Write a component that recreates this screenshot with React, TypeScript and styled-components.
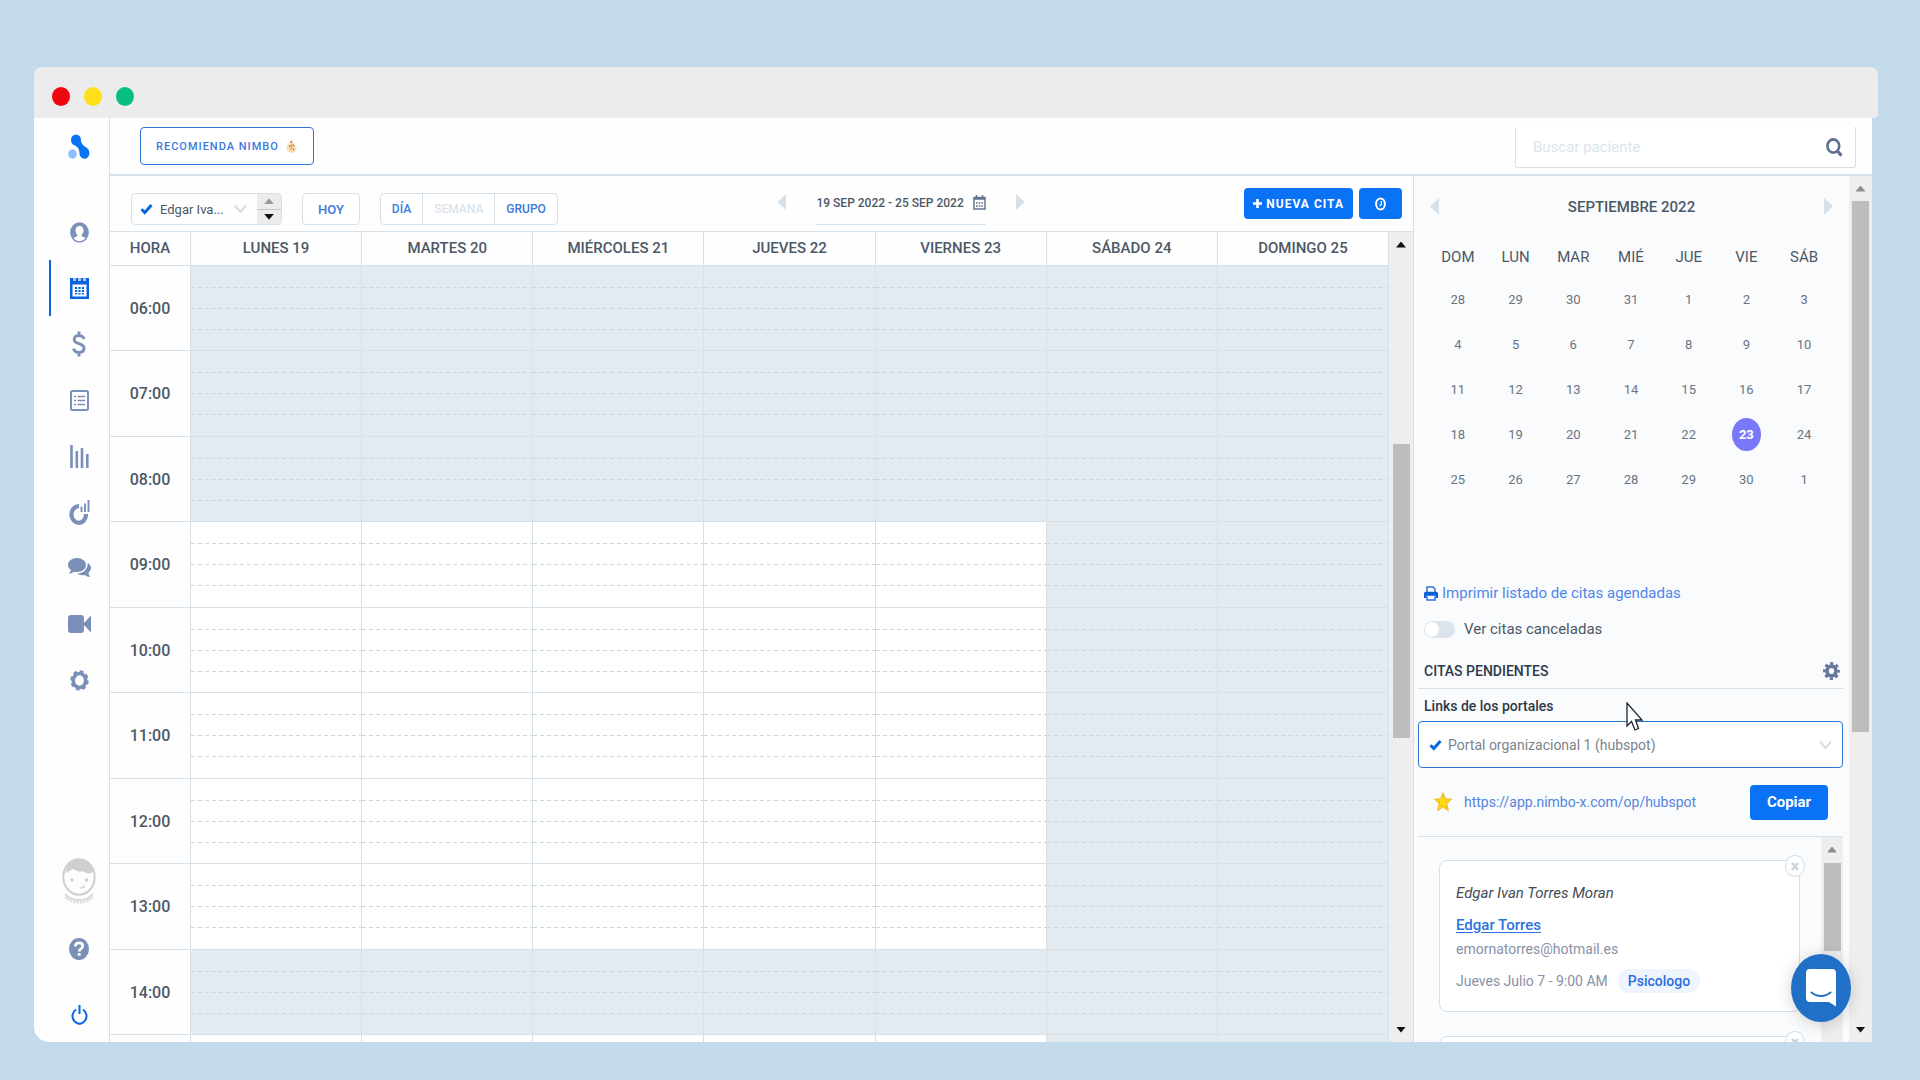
import React, { useState } from "react";
import styled, { createGlobalStyle } from "styled-components";

const c = {
  blue: "#0a72f5",
  link: "#3b78e0",
  line: "#d6e0e8",
  slate: "#7b90b8",
  ink: "#4d5866",
  closed: "#e4ebf0",
  panel: "#f9fbfd",
  thumb: "#bdbdbd",
  track: "#eeeeee",
};

const GlobalStyle = createGlobalStyle`
  *, *::before, *::after { box-sizing: border-box; }
  body { margin: 0; background: #c3daeb; font-family: Roboto, "Liberation Sans", sans-serif; font-size: 15px; color: ${c.ink}; }
  button, input, select { font: inherit; color: inherit; }
  button { cursor: pointer; padding: 0; }
  svg { display: block; flex: none; }
`;

const Page = styled.div`
  position: relative;
  height: 100vh;
  display: flex;
  flex-direction: column;
  padding: 67px 42px 38px 34px;
`;
const TitleBar = styled.div`
  flex: none;
  height: 51px;
  display: flex;
  align-items: center;
  gap: 14px;
  padding: 7px 18px 0;
  background: #ececec;
  border-radius: 8px 8px 4px 0;
`;
const Dot = styled.span<{ $color: string }>`
  width: 18px;
  height: 19px;
  border-radius: 50%;
  background: ${(p) => p.$color};
`;
const Body = styled.div`
  flex: 1;
  min-height: 0;
  display: flex;
  margin-right: 6px;
  background: #fefefe;
  border-radius: 0 0 0 15px;
  overflow: hidden;
`;

const Sidebar = styled.nav`
  flex: none;
  width: 76px;
  display: flex;
  flex-direction: column;
  border-right: 1px solid ${c.line};
`;
const Logo = styled.a`
  height: 86px;
  padding: 16px 0 0 34px;
`;
const NavItem = styled.a<{ $active?: boolean }>`
  height: 56px;
  margin-left: 15px;
  padding-right: 2px;
  display: flex;
  align-items: center;
  justify-content: center;
  border-left: 2px solid ${(p) => (p.$active ? "#0b62dc" : "transparent")};
  color: ${(p) => (p.$active ? "#0b62dc" : c.slate)};
`;
const NavFoot = styled.div`
  margin-top: auto;
  padding: 0 14px 17px 29px;
  display: flex;
  flex-direction: column;
  align-items: center;
  color: ${c.slate};
`;
const FootLink = styled.a<{ $gap?: number; $blue?: boolean }>`
  margin-top: ${(p) => p.$gap || 0}px;
  color: ${(p) => (p.$blue ? "#0b66e0" : "inherit")};
`;

const Content = styled.div`
  flex: 1;
  min-width: 0;
  display: flex;
  flex-direction: column;
`;
const Header = styled.header`
  flex: none;
  height: 58px;
  display: flex;
  justify-content: space-between;
  padding: 9px 16px 0 30px;
  border-bottom: 2px solid ${c.line};
`;
const Recommend = styled.button`
  height: 38px;
  padding: 0 16px 0 15px;
  display: flex;
  align-items: center;
  gap: 7px;
  border: 1px solid #2d74d2;
  border-radius: 4px;
  background: #fff;
  color: ${c.link};
  font-size: 11px;
  font-weight: 500;
  letter-spacing: 1px;
`;
const Search = styled.form`
  width: 341px;
  height: 41px;
  display: flex;
  align-items: center;
  padding: 0 12px 0 17px;
  background: #fff;
  border: 1px solid ${c.line};
  border-top: 0;
  border-radius: 0 0 3px 3px;
`;
const SearchInput = styled.input`
  flex: 1;
  min-width: 0;
  border: 0;
  padding: 0;
  outline: none;
  background: transparent;
  &::placeholder { color: #dbe4ec; opacity: 1; }
`;
const IconButton = styled.button`
  border: 0;
  background: none;
  display: flex;
  align-items: center;
  justify-content: center;
  color: #5f7090;
`;

const Split = styled.div`
  flex: 1;
  min-height: 0;
  display: flex;
`;
const Agenda = styled.main`
  flex: 1;
  min-width: 0;
  display: flex;
  flex-direction: column;
`;
const Toolbar = styled.div`
  flex: none;
  height: 55px;
  display: flex;
  justify-content: space-between;
  padding: 12px 11px 0 21px;
`;
const ToolLeft = styled.div`
  display: flex;
  align-items: flex-start;
  gap: 20px;
  padding-top: 5px;
`;
const Doctor = styled.div`
  width: 151px;
  height: 32px;
  display: flex;
  align-items: center;
  border: 1px solid ${c.line};
  border-radius: 4px;
  overflow: hidden;
  padding-left: 8px;
`;
const PlainSelect = styled.select`
  flex: 1;
  min-width: 0;
  height: 100%;
  padding: 0 0 0 7px;
  border: 0;
  outline: none;
  appearance: none;
  background: transparent;
`;
const DoctorSelect = styled(PlainSelect)`
  font-size: 13px;
`;
const Spinner = styled.div`
  align-self: stretch;
  width: 24px;
  margin-left: 10px;
  display: flex;
  flex-direction: column;
  background: #ececec;
`;
const SpinButton = styled.button`
  flex: 1;
  border: 0;
  background: none;
  display: flex;
  align-items: center;
  justify-content: center;
  & + & { border-top: 1px solid #c9c9c9; }
`;
const Group = styled.div`
  display: flex;
  height: 32px;
  border: 1px solid ${c.line};
  border-radius: 4px;
  overflow: hidden;
  background: #fff;
`;
const GroupButton = styled.button<{ $muted?: boolean }>`
  border: 0;
  background: none;
  padding: 0 11px;
  font-size: 12px;
  font-weight: 500;
  color: ${(p) => (p.$muted ? "#dbe4ec" : c.link)};
  & + & { border-left: 1px solid ${c.line}; }
`;
const Today = styled(GroupButton)`
  padding: 0 15px;
  font-size: 13px;
`;
const Range = styled.div`
  display: flex;
  align-items: flex-start;
  gap: 30px;
`;
const RangeField = styled.button`
  height: 37px;
  display: flex;
  gap: 9px;
  padding: 7px 0 0;
  border: 0;
  border-bottom: 1px solid ${c.line};
  background: none;
  font-size: 12px;
  line-height: 16px;
  font-weight: 500;
`;
const Tri = styled.span<{ $dir: "left" | "right" | "up" | "down"; $color: string; $w: number; $h: number }>`
  display: block;
  width: ${(p) => p.$w}px;
  height: ${(p) => p.$h}px;
  background: ${(p) => p.$color};
  clip-path: polygon(${(p) =>
    ({
      left: "0 50%, 100% 0, 100% 100%",
      right: "0 0, 100% 50%, 0 100%",
      up: "50% 0, 100% 100%, 0 100%",
      down: "0 0, 100% 0, 50% 100%",
    })[p.$dir]});
`;
const StepButton = styled(IconButton)`
  height: 28px;
`;
const ToolRight = styled.div`
  display: flex;
  justify-content: flex-end;
  gap: 6px;
`;
const Primary = styled.button`
  height: 31px;
  min-width: 43px;
  padding: 0 9px;
  display: flex;
  align-items: center;
  justify-content: center;
  gap: 4px;
  border: 0;
  border-radius: 4px;
  background: ${c.blue};
  color: #fff;
  font-size: 12px;
  font-weight: 700;
  letter-spacing: 1px;
`;
const GridWrap = styled.div`
  flex: 1;
  min-height: 0;
  display: flex;
  border-top: 1px solid ${c.line};
`;
const GridScroll = styled.div`
  flex: 1;
  min-width: 0;
  overflow: hidden;
`;
const Schedule = styled.table`
  width: 100%;
  table-layout: fixed;
  border-collapse: separate;
  border-spacing: 0;
`;
const HeadCell = styled.th<{ $narrow?: boolean }>`
  width: ${(p) => (p.$narrow ? "81px" : "auto")};
  height: 34px;
  padding: 0 0 2px;
  font-weight: 500;
  border: 1px solid ${c.line};
  border-width: 0 1px 1px 0;
`;
const HourRow = styled.tr`
  height: 85px;
  &:nth-child(even) { height: 86px; }
`;
const HourCell = styled.th`
  padding: 0;
  font-size: 16px;
  font-weight: 500;
  border: 1px solid ${c.line};
  border-width: 0 1px 1px 0;
`;
const dash = (y: number) =>
  `repeating-linear-gradient(90deg, #ccd6dd 0 4px, transparent 4px 7px) 0 ${y}px / 100% 1px no-repeat`;
const Slot = styled.td<{ $open: boolean }>`
  padding: 0;
  border: 1px solid ${c.line};
  border-width: 0 1px 1px 0;
  background: ${dash(21)}, ${dash(42)}, ${dash(63)}, ${(p) => (p.$open ? "#fff" : c.closed)};
`;

const Track = styled.div<{ $width: number }>`
  flex: none;
  width: ${(p) => p.$width}px;
  display: flex;
  flex-direction: column;
  align-items: center;
  background: ${c.track};
`;
const TrackArrow = styled.div`
  flex: none;
  height: 25px;
  display: flex;
  align-items: center;
`;
const Gap = styled.div<{ $grow: number }>`
  flex: ${(p) => p.$grow} 1 0;
`;
const Thumb = styled.div<{ $grow: number }>`
  flex: ${(p) => p.$grow} 1 0;
  width: 17px;
  background: ${c.thumb};
`;

const Panel = styled.aside`
  flex: none;
  width: 459px;
  display: flex;
  border-left: 1px solid ${c.line};
  background: ${c.panel};
`;
const PanelMain = styled.div`
  flex: 1;
  min-width: 0;
  min-height: 0;
  display: flex;
  flex-direction: column;
`;
const MonthBar = styled.div`
  flex: none;
  height: 61px;
  padding: 0 16px;
  display: flex;
  align-items: center;
  justify-content: space-between;
  font-weight: 500;
`;
const Month = styled.table`
  flex: none;
  width: calc(100% - 31px);
  margin: 0 16px 0 15px;
  table-layout: fixed;
  border-collapse: collapse;
  text-align: center;
`;
const WeekDay = styled.th`
  height: 40px;
  padding: 0;
  font-weight: 400;
`;
const Day = styled.td`
  height: 45px;
  padding: 0;
  font-size: 13px;
  color: #6b7480;
`;
const Selected = styled.span`
  display: inline-flex;
  width: 29px;
  height: 33px;
  align-items: center;
  justify-content: center;
  border-radius: 50%;
  background: #7a78fa;
  color: #fff;
  font-weight: 700;
`;
const Options = styled.div`
  flex: none;
  display: flex;
  flex-direction: column;
  align-items: flex-start;
  gap: 12px;
  padding: 79px 10px 0;
`;
const PrintLink = styled.a`
  display: flex;
  align-items: center;
  gap: 4px;
  line-height: 24px;
  color: #4f86ea;
  text-decoration: none;
`;
const ToggleLabel = styled.label`
  display: flex;
  align-items: center;
  gap: 9px;
  line-height: 24px;
`;
const Toggle = styled.input`
  appearance: none;
  margin: 0;
  width: 31px;
  height: 17px;
  padding: 1px;
  border-radius: 9px;
  background: #dbe4ec;
  display: flex;
  &::before { content: ""; width: 14px; height: 15px; border-radius: 50%; background: #fff; }
  &:checked { justify-content: flex-end; background: ${c.blue}; }
`;
const Pending = styled.section`
  flex: 1;
  min-height: 0;
  display: flex;
  flex-direction: column;
  padding: 16px 6px 0 4px;
`;
const PendingHead = styled.div`
  flex: none;
  height: 32px;
  padding: 0 3px 4px 6px;
  display: flex;
  align-items: center;
  justify-content: space-between;
  border-bottom: 1px solid ${c.line};
`;
const Title = styled.h2`
  margin: 0;
  font-size: 14px;
  font-weight: 500;
  color: #2e3947;
`;
const PortalLabel = styled.label`
  flex: none;
  padding: 6px 6px 4px;
  font-size: 14px;
  line-height: 22px;
  font-weight: 500;
  color: #2e3947;
`;
const Portal = styled.div`
  flex: none;
  height: 47px;
  display: flex;
  align-items: center;
  padding: 0 10px 0 10px;
  background: #fff;
  border: 1px solid #2d74d2;
  border-radius: 4px;
`;
const PortalSelect = styled(PlainSelect)`
  padding-left: 6px;
  font-size: 14px;
  color: #7b838d;
`;
const CopyRow = styled.div`
  flex: none;
  height: 69px;
  display: flex;
  align-items: center;
  padding: 0 15px 0 16px;
  border-bottom: 1px solid ${c.line};
`;
const CopyLink = styled.a`
  margin: 0 auto 0 12px;
  font-size: 14px;
  color: #5585dc;
  text-decoration: none;
`;
const CopyButton = styled(Primary)`
  width: 78px;
  height: 35px;
  font-size: 15px;
  letter-spacing: 0;
`;
const ListWrap = styled.div`
  flex: 1;
  min-height: 0;
  display: flex;
`;
const List = styled.div`
  flex: 1;
  min-width: 0;
  overflow: hidden;
  display: flex;
  flex-direction: column;
  gap: 24px;
  padding: 23px 21px 0;
`;
const Card = styled.article`
  position: relative;
  flex: none;
  min-height: 152px;
  padding: 20px 16px 18px;
  background: #fff;
  border: 1px solid ${c.line};
  border-radius: 8px;
  font-size: 14px;
  line-height: 24px;
  color: #8791a8;
`;
const CloseButton = styled.button`
  position: absolute;
  top: -6px;
  right: -6px;
  width: 20px;
  height: 22px;
  display: flex;
  align-items: center;
  justify-content: center;
  border: 1px solid ${c.line};
  border-radius: 50%;
  background: #fff;
  color: #cbd6e0;
`;
const Patient = styled.div`
  margin-bottom: 8px;
  font-size: 15px;
  font-style: italic;
  color: #444c56;
`;
const DoctorLink = styled.a`
  display: block;
  font-size: 15px;
  font-weight: 500;
  color: #2b72e0;
  text-underline-offset: 2px;
`;
const When = styled.div`
  display: flex;
  align-items: center;
  gap: 10px;
  margin-top: 8px;
`;
const Tag = styled.span`
  padding: 0 10px;
  border-radius: 12px;
  background: #eef5fd;
  color: #2b6fe2;
  font-weight: 500;
`;
const Chat = styled.button`
  position: absolute;
  right: 69px;
  bottom: 58px;
  width: 60px;
  height: 68px;
  display: flex;
  align-items: center;
  justify-content: center;
  border: 0;
  border-radius: 50%;
  background: #2170c7;
  box-shadow: 0 2px 16px rgba(0, 0, 0, 0.18);
`;
const Pointer = styled.svg`
  position: absolute;
  left: 1626px;
  top: 702px;
`;

const Check = () => (
  <svg width="13" height="12" viewBox="0 0 13 12">
    <path d="M1.5 6.2 L4.8 9.5 L11.5 2" fill="none" stroke="#0b66e0" strokeWidth="3" />
  </svg>
);
const Chevron = () => (
  <svg width="13" height="10" viewBox="0 0 13 10">
    <path d="M1 1.5 L6.5 8 L12 1.5" fill="none" stroke="#d3dde6" strokeWidth="2" />
  </svg>
);

const LogoIcon = () => (
  <svg width="24" height="26" viewBox="0 0 24 26">
    <path d="M3 6a5 5.500 0 0 1 10 0c0 4 3 6.300 6 8a5 5.800 0 1 1-7.500 6c0-5-1.500-7-5-8.800A5.200 5.500 0 0 1 3 6z" fill="#0a72f5" />
    <ellipse cx="4.500" cy="20" rx="4.300" ry="4.700" fill="#8ec1fb" />
  </svg>
);
const UserIcon = () => (
  <svg width="19" height="21" viewBox="0 0 19 21">
    <ellipse cx="9.500" cy="10.500" rx="9.300" ry="10.300" fill="currentColor" />
    <path d="M9.500 4c2.600 0 4 2 4 4.500 0 1.800-.8 3.300-1.800 4.200v1.500l4 1.900a8 8.500 0 0 1-12.400 0l4-1.900v-1.500c-1-.9-1.800-2.400-1.800-4.200C5.500 6 6.900 4 9.500 4z" fill="#fff" />
  </svg>
);
const CalendarIcon = () => (
  <svg width="19" height="21" viewBox="0 0 19 21">
    <path d="M0 0h19v21H0z" fill="currentColor" />
    <path d="M2.500 6.500h14v12h-14z" fill="#fff" />
    <path d="M3 0h3v3H3zM8 0h3v3H8zM13 0h3v3h-3z" fill="#a9c6f2" />
    <path d="M5 9h2.200v2H5zM8.400 9h2.200v2H8.400zM11.800 9H14v2h-2.200zM5 12h2.200v2H5zM8.400 12h2.200v2H8.400zM11.800 12H14v2h-2.200zM5 15h2.200v1.500H5zM8.400 15h2.200v1.500H8.400zM11.800 15H14v1.500h-2.200z" fill="currentColor" />
  </svg>
);
const DollarIcon = () => (
  <svg width="14" height="26" viewBox="0 0 14 26">
    <path d="M12 8C11.500 5.700 9.700 4.600 7 4.600 4.200 4.600 2.200 6 2.200 8.400c0 2.500 2 3.400 4.800 4.200 3 .9 5 2 5 4.700 0 2.600-2.100 4.100-5 4.100-3 0-5-1.300-5.400-3.900M7 .5v4.500M7 21v4.500" fill="none" stroke="currentColor" strokeWidth="2.900" />
  </svg>
);
const ListIcon = () => (
  <svg width="19" height="21" viewBox="0 0 19 21">
    <rect x="1" y="1" width="17" height="19" rx="1.500" fill="none" stroke="currentColor" strokeWidth="2" />
    <path d="M4 6.500h2M4 10.500h2M4 14.500h2M7.500 6.500h7.500M7.500 10.500h7.500M7.500 14.500h7.500" stroke="currentColor" strokeWidth="1.700" />
  </svg>
);
const BarsIcon = () => (
  <svg width="19" height="23" viewBox="0 0 19 23">
    <path d="M1.500 0v23M6.800 6v17M12 3v20M17.300 9v14" stroke="currentColor" strokeWidth="2.600" />
  </svg>
);
const DonutIcon = () => (
  <svg width="21" height="25" viewBox="0 0 21 25">
    <path d="M10 6.200A7.300 8.300 0 1 0 17 14" fill="none" stroke="currentColor" strokeWidth="4.200" />
    <path d="M12.500 6.500V12M16 3.500V12M19.500 0v12" stroke="currentColor" strokeWidth="1.900" />
  </svg>
);
const CommentsIcon = () => (
  <svg width="23" height="20" viewBox="0 0 23 20">
    <path d="M9 0c5 0 9 3 9 7s-4 7-9 7c-1 0-2-.1-2.900-.3C4.700 14.900 3 15.500 1 15.500c1-1 1.700-2.200 1.800-3.400C1 10.900 0 9 0 7c0-4 4-7 9-7z" fill="currentColor" />
    <path d="M19.800 5c2 1.200 3.200 3 3.200 5 0 1.900-1 3.500-2.600 4.700.2 1.500.9 2.900 1.900 4.100-2 .1-4-.7-5.400-1.900-3 .6-5.900.1-8-1.300 6.300 0 10.900-4.300 10.900-10.600z" fill="currentColor" />
  </svg>
);
const VideoIcon = () => (
  <svg width="23" height="18" viewBox="0 0 23 18">
    <rect width="16" height="18" rx="3" fill="currentColor" />
    <path d="M15 9l8-8.500v17z" fill="currentColor" />
  </svg>
);
const GearOutline = () => (
  <svg width="19" height="21" viewBox="0 0 19 21">
    <ellipse cx="9.500" cy="10.500" rx="6.200" ry="7" fill="none" stroke="currentColor" strokeWidth="3.600" />
    <ellipse cx="9.500" cy="10.500" rx="8.100" ry="9.100" fill="none" stroke="currentColor" strokeWidth="2.200" strokeDasharray="3.800 2.960" />
  </svg>
);
const AvatarIcon = () => (
  <svg width="34" height="46" viewBox="0 0 34 46">
    <ellipse cx="17" cy="19" rx="15.700" ry="17.700" fill="#fdfdfd" stroke="#cfcfcf" strokeWidth="2" />
    <path d="M4 15C5 6 10 1.500 17 1.500S30 6 31 14c-3 2-7 2-10-1-5 2-8-1-10-2-2 1-4 2-7 4z" fill="#cfcfcf" />
    <circle cx="10" cy="22" r="1.700" fill="#cfcfcf" />
    <circle cx="24.500" cy="22" r="1.700" fill="#cfcfcf" />
    <path d="M18.500 30c2 0 3.500-1 4-2.500M3 36c7 8 21 8 28 0" fill="none" stroke="#d2d2d2" strokeWidth="1.500" />
    <path d="M4 38.500c7 7 19 7 26 0" fill="none" stroke="#dcdcdc" strokeWidth="4" strokeDasharray="2 1" />
  </svg>
);
const HelpIcon = () => (
  <svg width="20" height="22" viewBox="0 0 20 22">
    <ellipse cx="10" cy="11" rx="10" ry="11" fill="currentColor" />
    <path d="M6.300 8.300C6.500 6 7.900 4.900 10 4.900s3.700 1.200 3.700 3.100c0 2.800-3.500 2.700-3.500 5.500" fill="none" stroke="#fff" strokeWidth="2.700" />
    <path d="M8.800 15h2.800v2.800H8.800z" fill="#fff" />
  </svg>
);
const PowerIcon = () => (
  <svg width="17" height="20" viewBox="0 0 17 20">
    <path d="M5 4.500a7 7.600 0 1 0 7 0" fill="none" stroke="currentColor" strokeWidth="2" />
    <path d="M8.500 0v9" stroke="currentColor" strokeWidth="2" />
  </svg>
);
const HandsIcon = () => (
  <svg width="11" height="14" viewBox="0 0 11 14">
    <path d="M5.500 0l2 3.500 2.700 4c1.200 3-.8 6.500-4.700 6.500S-.4 10.500.8 7.500l2.700-4z" fill="#f8dfb4" />
    <path d="M4.500 3H6M3 7h1.500M6.500 6.500H8M4.500 10H6M7 10.500h1" stroke="#d8562f" strokeWidth="1.500" />
    <path d="M5.500 5v6" stroke="#f0a63a" />
  </svg>
);
const SearchIcon = () => (
  <svg width="17" height="19" viewBox="0 0 17 19">
    <ellipse cx="7.300" cy="8" rx="5.900" ry="6.600" fill="none" stroke="currentColor" strokeWidth="2.600" />
    <path d="M11.300 13l4.200 4.600" stroke="currentColor" strokeWidth="3.200" />
  </svg>
);
const SmallCalendar = () => (
  <svg width="13" height="15" viewBox="0 0 13 15">
    <path d="M1 2.500h11v11.500H1z" fill="none" stroke="#65758e" strokeWidth="1.500" />
    <path d="M1 3.500h11" stroke="#65758e" strokeWidth="2.400" />
    <path d="M3.500 0v3M9.500 0v3" stroke="#65758e" strokeWidth="1.500" />
    <path d="M3 8h7M3 11h7" stroke="#65758e" strokeWidth="1.600" strokeDasharray="1.700 1" />
  </svg>
);
const PlusIcon = () => (
  <svg width="9" height="11" viewBox="0 0 9 11">
    <path d="M4.500 1v9M0 5.500h9" stroke="#fff" strokeWidth="2.600" />
  </svg>
);
const ClockIcon = () => (
  <svg width="11" height="14" viewBox="0 0 11 14">
    <ellipse cx="5.500" cy="7" rx="4.400" ry="5.500" fill="none" stroke="#fff" strokeWidth="2" />
    <path d="M6.300 4v3.500L4.500 9" fill="none" stroke="#fff" strokeWidth="1.200" />
  </svg>
);
const PrinterIcon = () => (
  <svg width="14" height="15" viewBox="0 0 14 15">
    <path d="M3 6V1h6l2 2v3M3 10.500V14h8v-3.500" fill="none" stroke="#2b72e0" strokeWidth="1.500" />
    <path d="M0 12V8c0-1.400.8-2.200 2-2.200h10c1.200 0 2 .8 2 2.200v4h-2.500V9.800h-9V12z" fill="#0b5fd6" />
  </svg>
);
const GearIcon = () => (
  <svg width="17" height="18" viewBox="0 0 17 18">
    <ellipse cx="8.500" cy="9" rx="4.500" ry="4.900" fill="none" stroke="#66779a" strokeWidth="3.600" />
    <ellipse cx="8.500" cy="9" rx="7.100" ry="7.600" fill="none" stroke="#66779a" strokeWidth="2.600" strokeDasharray="3.100 2.675" strokeDashoffset="1.500" />
  </svg>
);
const StarIcon = () => (
  <svg width="18" height="20" viewBox="0 0 18 20">
    <path d="M9 .8l2.300 6 6.200.4-4.700 4.500 1.500 6.900L9 15l-5.300 3.600 1.500-6.900L.5 7.200l6.200-.4z" fill="#fdd916" stroke="#f2b526" />
    <path d="M8.500 4h1v1h-1zM5 9h1v1H5zM12 9h1v1h-1zM7 13h1v1H7zM11 14h1v1h-1z" fill="#e08a1c" />
  </svg>
);
const CrossIcon = () => (
  <svg width="8" height="9" viewBox="0 0 8 9">
    <path d="M1 1l6 7M7 1L1 8" stroke="currentColor" strokeWidth="2.600" />
  </svg>
);
const ChatIcon = () => (
  <svg width="30" height="38" viewBox="0 0 30 38">
    <path d="M4 0h22a4 4 0 0 1 4 4v33.500L23 33H4a4 4 0 0 1-4-4V4a4 4 0 0 1 4-4z" fill="#fff" />
    <path d="M5.500 23.500c5.500 4.600 13.500 4.600 19 0" fill="none" stroke="#2170c7" strokeWidth="2" strokeLinecap="round" />
  </svg>
);

const nav = [
  { name: "Pacientes", icon: <UserIcon /> },
  { name: "Agenda", icon: <CalendarIcon />, active: true },
  { name: "Pagos", icon: <DollarIcon /> },
  { name: "Listas", icon: <ListIcon /> },
  { name: "Reportes", icon: <BarsIcon /> },
  { name: "Indicadores", icon: <DonutIcon /> },
  { name: "Mensajes", icon: <CommentsIcon /> },
  { name: "Video", icon: <VideoIcon /> },
  { name: "Ajustes", icon: <GearOutline /> },
];
const weekdays = ["LUNES 19", "MARTES 20", "MIÉRCOLES 21", "JUEVES 22", "VIERNES 23", "SÁBADO 24", "DOMINGO 25"];
const hours = ["06:00", "07:00", "08:00", "09:00", "10:00", "11:00", "12:00", "13:00", "14:00", ""];
const openRows = [3, 4, 5, 6, 7, 9];
const isOpen = (row: number, day: number) => day < 5 && openRows.includes(row);
const monthDays = ["DOM", "LUN", "MAR", "MIÉ", "JUE", "VIE", "SÁB"];
const weeks = [
  [28, 29, 30, 31, 1, 2, 3],
  [4, 5, 6, 7, 8, 9, 10],
  [11, 12, 13, 14, 15, 16, 17],
  [18, 19, 20, 21, 22, 23, 24],
  [25, 26, 27, 28, 29, 30, 1],
];

type ScrollProps = { width: number; before: number; thumb: number; after: number; up: string; down: string };
const ScrollBar = ({ width, before, thumb, after, up, down }: ScrollProps) => (
  <Track $width={width} aria-hidden="true">
    <TrackArrow><Tri $dir="up" $color={up} $w={10} $h={6} /></TrackArrow>
    <Gap $grow={before} />
    <Thumb $grow={thumb} />
    <Gap $grow={after} />
    <TrackArrow><Tri $dir="down" $color={down} $w={10} $h={6} /></TrackArrow>
  </Track>
);

const Appointment = ({ children }: { children?: React.ReactNode }) => (
  <Card>
    <CloseButton aria-label="Descartar"><CrossIcon /></CloseButton>
    {children}
  </Card>
);

export default function App() {
  const [showCancelled, setShowCancelled] = useState(false);
  return (
    <Page>
      <GlobalStyle />
      <TitleBar>
        <Dot $color="#f0060e" />
        <Dot $color="#ffdf1c" />
        <Dot $color="#08bf83" />
      </TitleBar>
      <Body>
        <Sidebar>
          <Logo href="#" aria-label="Nimbo"><LogoIcon /></Logo>
          {nav.map((n) => (
            <NavItem key={n.name} href="#" aria-label={n.name} $active={n.active}>{n.icon}</NavItem>
          ))}
          <NavFoot>
            <FootLink href="#" aria-label="Perfil"><AvatarIcon /></FootLink>
            <FootLink href="#" aria-label="Ayuda" $gap={34}><HelpIcon /></FootLink>
            <FootLink href="#" aria-label="Salir" $gap={45} $blue><PowerIcon /></FootLink>
          </NavFoot>
        </Sidebar>
        <Content>
          <Header>
            <Recommend>RECOMIENDA NIMBO <HandsIcon /></Recommend>
            <Search onSubmit={(e) => e.preventDefault()}>
              <SearchInput aria-label="Buscar paciente" placeholder="Buscar paciente" />
              <IconButton aria-label="Buscar"><SearchIcon /></IconButton>
            </Search>
          </Header>
          <Split>
            <Agenda>
              <Toolbar>
                <ToolLeft>
                  <Doctor>
                    <Check />
                    <DoctorSelect aria-label="Doctor"><option>Edgar Iva...</option></DoctorSelect>
                    <Chevron />
                    <Spinner>
                      <SpinButton aria-label="Anterior"><Tri $dir="up" $color="#9a9a9a" $w={10} $h={6} /></SpinButton>
                      <SpinButton aria-label="Siguiente"><Tri $dir="down" $color="#111" $w={10} $h={6} /></SpinButton>
                    </Spinner>
                  </Doctor>
                  <Group><Today>HOY</Today></Group>
                  <Group>
                    <GroupButton>DÍA</GroupButton>
                    <GroupButton $muted>SEMANA</GroupButton>
                    <GroupButton>GRUPO</GroupButton>
                  </Group>
                </ToolLeft>
                <Range>
                  <StepButton aria-label="Semana anterior"><Tri $dir="left" $color={c.line} $w={9} $h={17} /></StepButton>
                  <RangeField>19 SEP 2022 - 25 SEP 2022 <SmallCalendar /></RangeField>
                  <StepButton aria-label="Semana siguiente"><Tri $dir="right" $color={c.line} $w={9} $h={17} /></StepButton>
                </Range>
                <ToolRight>
                  <Primary><PlusIcon />NUEVA CITA</Primary>
                  <Primary aria-label="Horario"><ClockIcon /></Primary>
                </ToolRight>
              </Toolbar>
              <GridWrap>
                <GridScroll>
                  <Schedule>
                    <thead>
                      <tr>
                        <HeadCell $narrow>HORA</HeadCell>
                        {weekdays.map((d) => <HeadCell key={d}>{d}</HeadCell>)}
                      </tr>
                    </thead>
                    <tbody>
                      {hours.map((h, row) => (
                        <HourRow key={row}>
                          <HourCell>{h}</HourCell>
                          {weekdays.map((d, i) => <Slot key={d} $open={isOpen(row, i)} />)}
                        </HourRow>
                      ))}
                    </tbody>
                  </Schedule>
                </GridScroll>
                <ScrollBar width={24} before={187} thumb={294} after={279} up="#111" down="#111" />
              </GridWrap>
            </Agenda>
            <Panel>
              <PanelMain>
                <MonthBar>
                  <IconButton aria-label="Mes anterior"><Tri $dir="left" $color={c.line} $w={9} $h={17} /></IconButton>
                  SEPTIEMBRE 2022
                  <IconButton aria-label="Mes siguiente"><Tri $dir="right" $color={c.line} $w={9} $h={17} /></IconButton>
                </MonthBar>
                <Month>
                  <thead>
                    <tr>{monthDays.map((d) => <WeekDay key={d}>{d}</WeekDay>)}</tr>
                  </thead>
                  <tbody>
                    {weeks.map((w) => (
                      <tr key={w[0]}>
                        {w.map((d) => <Day key={d}>{d === 23 ? <Selected>{d}</Selected> : d}</Day>)}
                      </tr>
                    ))}
                  </tbody>
                </Month>
                <Options>
                  <PrintLink href="#"><PrinterIcon />Imprimir listado de citas agendadas</PrintLink>
                  <ToggleLabel>
                    <Toggle type="checkbox" checked={showCancelled} onChange={(e) => setShowCancelled(e.target.checked)} />
                    Ver citas canceladas
                  </ToggleLabel>
                </Options>
                <Pending>
                  <PendingHead>
                    <Title>CITAS PENDIENTES</Title>
                    <IconButton aria-label="Configurar"><GearIcon /></IconButton>
                  </PendingHead>
                  <PortalLabel htmlFor="portal">Links de los portales</PortalLabel>
                  <Portal>
                    <Check />
                    <PortalSelect id="portal"><option>Portal organizacional 1 (hubspot)</option></PortalSelect>
                    <Chevron />
                  </Portal>
                  <CopyRow>
                    <StarIcon />
                    <CopyLink href="#">https://app.nimbo-x.com/op/hubspot</CopyLink>
                    <CopyButton>Copiar</CopyButton>
                  </CopyRow>
                  <ListWrap>
                    <List>
                      <Appointment>
                        <Patient>Edgar Ivan Torres Moran</Patient>
                        <DoctorLink href="#">Edgar Torres</DoctorLink>
                        <div>emornatorres@hotmail.es</div>
                        <When>
                          Jueves Julio 7 - 9:00 AM
                          <Tag>Psicologo</Tag>
                        </When>
                      </Appointment>
                      <Appointment />
                    </List>
                    <ScrollBar width={22} before={1} thumb={88} after={66} up="#8e8e8e" down="#eeeeee" />
                  </ListWrap>
                </Pending>
              </PanelMain>
              <ScrollBar width={23} before={0} thumb={531} after={285} up="#8e8e8e" down="#111" />
            </Panel>
          </Split>
        </Content>
      </Body>
      <Pointer width="18" height="29" viewBox="0 0 18 29" aria-hidden="true">
        <path d="M1 1v23l4.500-4.500L9 28l3.500-1.500L9.500 18H16z" fill="#fff" stroke="#1b2530" strokeWidth="1.300" />
      </Pointer>
      <Chat aria-label="Abrir chat"><ChatIcon /></Chat>
    </Page>
  );
}
